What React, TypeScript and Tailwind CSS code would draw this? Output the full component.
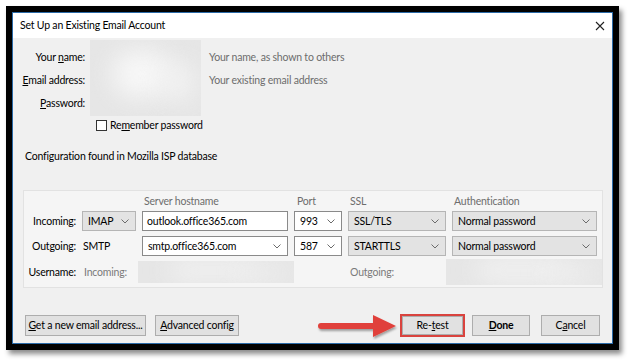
import React from "react";

const Chevron = () => (
  <svg width="8" height="5" viewBox="0 0 8 5" className="shrink-0">
    <path d="M0.5 0.5 L4 4 L7.5 0.5" fill="none" stroke="#6b6b6b" strokeWidth="1" />
  </svg>
);

const Select = ({ label, w, gray = true }: { label: string; w: string; gray?: boolean }) => (
  <div
    className={`${w} h-[20px] flex items-center justify-between pl-[5px] pr-[6px] border whitespace-nowrap ${
      gray ? "bg-[#e3e3e3] border-[#b5b5b5]" : "bg-white border-[#8a8a8a]"
    }`}
  >
    <span>{label}</span>
    <Chevron />
  </div>
);

const Input = ({ label, w }: { label: string; w: string }) => (
  <div className={`${w} h-[20px] flex items-center pl-[4px] bg-white border border-[#8a8a8a] whitespace-nowrap`}>
    {label}
  </div>
);

const Blur = ({ cls }: { cls: string }) => (
  <div className={`${cls} relative overflow-hidden bg-[#e6e6e6]`}>
    <div className="absolute left-[20%] top-[15%] w-[55%] h-[60%] rounded-full bg-[#f7f7f7] blur-md" />
    <div className="absolute right-[5%] top-[30%] w-[30%] h-[50%] rounded-full bg-[#f2f2f2] blur-md" />
  </div>
);

const Btn = ({ children, w, bold = false }: { children: React.ReactNode; w: string; bold?: boolean }) => (
  <div
    className={`${w} h-[21px] flex items-center justify-center bg-[#e1e1e1] border border-[#adadad] whitespace-nowrap ${
      bold ? "font-bold" : ""
    }`}
  >
    {children}
  </div>
);

export default function App() {
  return (
    <div
      className="w-[633px] h-[364px] bg-white pt-[6px] pl-[6px] text-[10.5px] tracking-[-0.2px] text-black leading-none whitespace-nowrap"
      style={{ fontFamily: 'Lato, "Noto Sans", sans-serif' }}
    >
      <div className="w-[613px] h-[344px] bg-black p-[6px] shadow-[3px_4px_5px_rgba(0,0,0,0.45)]">
        <div className="w-[601px] h-[332px] border border-[#2a6aa8] flex flex-col">
          {/* title bar */}
          <div className="h-[25px] bg-white flex items-center justify-between pl-[7px] pr-[7px] shrink-0">
            <span>Set Up an Existing Email Account</span>
            <svg width="10" height="10" viewBox="0 0 10 10">
              <path d="M1 1 L9 9 M9 1 L1 9" stroke="#222" strokeWidth="1.1" />
            </svg>
          </div>
          {/* body */}
          <div className="flex-1 bg-[#f0f0f0] flex flex-col">
            {/* identity */}
            <div className="flex h-[78px] pt-[2px]">
              <div className="w-[72px] flex flex-col items-end pt-[12px] gap-[12px]">
                <span className="h-[11px]">
                  Your <u>n</u>ame:
                </span>
                <span className="h-[11px]">
                  <u>E</u>mail address:
                </span>
                <span className="h-[11px]">
                  <u>P</u>assword:
                </span>
              </div>
              <Blur cls="ml-[5px] w-[111px] h-[76px]" />
              <div className="ml-[8px] flex flex-col pt-[12px] gap-[12px] text-[#6d6d6d]">
                <span className="h-[11px]">Your name, as shown to others</span>
                <span className="h-[11px]">Your existing email address</span>
              </div>
            </div>
            <div className="flex items-center ml-[83px] mt-[4px] h-[11px]">
              <div className="w-[11px] h-[11px] border border-[#333] bg-white" />
              <span className="ml-[3px]">
                Re<u>m</u>ember password
              </span>
            </div>
            <div className="ml-[12px] mt-[20px] h-[11px]">Configuration found in Mozilla ISP database</div>
            {/* server group */}
            <div className="ml-[10px] mt-[28px] w-[580px] h-[98px] border border-[#e2e2e2] bg-[#f5f5f5] pl-[4px] pr-[5px] flex flex-col">
              <div className="flex h-[20px] items-center text-[#6d6d6d]">
                <div className="w-[114px]" />
                <div className="w-[152px] pl-[2px]">Server hostname</div>
                <div className="w-[54px] pl-[3px]">Port</div>
                <div className="w-[104px] pl-[2px]">SSL</div>
                <div className="pl-[2px]">Authentication</div>
              </div>
              <div className="flex items-center h-[20px] gap-[6px]">
                <div className="w-[48px] text-right">Incoming:</div>
                <Select label="IMAP" w="w-[54px]" />
                <Input label="outlook.office365.com" w="w-[146px]" />
                <Select label="993" w="w-[48px]" gray={false} />
                <Select label="SSL/TLS" w="w-[98px]" />
                <Select label="Normal password" w="w-[145px]" />
              </div>
              <div className="flex items-center h-[20px] gap-[6px] mt-[5px]">
                <div className="w-[48px] text-right">Outgoing:</div>
                <div className="w-[54px] pl-[1px]">SMTP</div>
                <Select label="smtp.office365.com" w="w-[146px]" gray={false} />
                <Select label="587" w="w-[48px]" gray={false} />
                <Select label="STARTTLS" w="w-[98px]" />
                <Select label="Normal password" w="w-[145px]" />
              </div>
              <div className="flex items-center h-[24px] mt-[4px]">
                <div className="w-[48px] text-right">Username:</div>
                <div className="w-[54px] ml-[8px] text-[#7a7a7a]">Incoming:</div>
                <Blur cls="w-[156px] h-[22px]" />
                <div className="w-[56px]" />
                <div className="w-[96px] text-[#7a7a7a]">Outgoing:</div>
                <Blur cls="w-[156px] h-[26px] -mr-[10px]" />
              </div>
            </div>
            {/* buttons */}
            <div className="flex items-center ml-[12px] mt-[26px] h-[23px]">
              <Btn w="w-[121px]">
                <span>
                  <u>G</u>et a new email address...
                </span>
              </Btn>
              <div className="ml-[9px]">
                <Btn w="w-[84px]">
                  <span>
                    <u>A</u>dvanced config
                  </span>
                </Btn>
              </div>
              <svg width="82" height="26" viewBox="0 0 82 26" className="ml-[78px] mt-[2px]">
                <defs>
                  <filter id="sh" x="-10%" y="-30%" width="130%" height="170%">
                    <feDropShadow dx="1" dy="2" stdDeviation="1.2" floodColor="#000" floodOpacity="0.35" />
                  </filter>
                </defs>
                <path
                  d="M4 9 L56 9 L56 1 L79 12 L56 23 L56 15 L4 15 Q1 15 1 12 Q1 9 4 9 Z"
                  fill="#e0413a"
                  filter="url(#sh)"
                />
              </svg>
              <div className="ml-[1px] w-[65px] h-[23px] border-2 border-[#d9433e] p-0 flex">
                <div className="flex-1 flex items-center justify-center bg-[#e1e1e1] border border-[#adadad]">
                  <span>
                    Re-<u>t</u>est
                  </span>
                </div>
              </div>
              <div className="ml-[7px]">
                <Btn w="w-[58px]" bold>
                  <span>
                    <u>D</u>one
                  </span>
                </Btn>
              </div>
              <div className="ml-[11px]">
                <Btn w="w-[59px]">
                  <span>
                    C<u>a</u>ncel
                  </span>
                </Btn>
              </div>
            </div>
          </div>
        </div>
      </div>
    </div>
  );
}
